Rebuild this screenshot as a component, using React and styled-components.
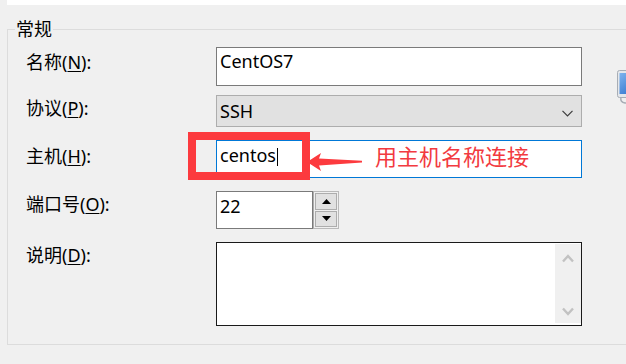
import React from 'react';
import styled, { createGlobalStyle } from 'styled-components';

const GlobalStyle = createGlobalStyle`
  html, body {
    margin: 0;
    padding: 0;
    background: #f0f0f0;
    overflow: hidden;
    font-family: "Noto Sans", "Noto Sans CJK SC", sans-serif;
  }
`;

const TopStrip = styled.div`
  height: 5px;
  margin-left: 7px;
  background: #fff;
`;

const Group = styled.fieldset`
  margin: 12px 0 0 7px;
  padding: 6px 0 18px 0;
  min-width: 0;
  border: 1px solid #dcdcdc;
  border-right: none;
  overflow: hidden;
`;

const Legend = styled.legend`
  margin-left: 7px;
  padding: 0 1px;
  font-size: 18px;
  line-height: 24px;
  color: #000;
`;

const Form = styled.div`
  padding-left: 18px;
`;

const Row = styled.div`
  display: flex;
  align-items: flex-start;
  margin-top: ${p => p.$gap || 0}px;
`;

const Label = styled.label`
  flex: none;
  width: 190px;
  padding-top: ${p => p.$offset || 0}px;
  font-size: 18px;
  line-height: 24px;
  color: #000;

  u {
    text-decoration-thickness: 1px;
    text-underline-offset: 2px;
  }
`;

const Field = styled.div`
  position: relative;
  box-sizing: border-box;
  flex: none;
  display: flex;
  align-items: flex-start;
  justify-content: ${p => p.$justify || 'flex-start'};
  width: ${p => p.$w || 366}px;
  height: ${p => p.$h}px;
  padding: ${p => p.$pt ?? 2}px ${p => p.$pr ?? 3}px 0 3px;
  border: 1px solid ${p => p.$border || '#7a7a7a'};
  background: ${p => p.$bg || '#fff'};
  font-size: 18px;
  line-height: 24px;
  color: #000;
`;

const Chevron = styled.svg`
  margin-top: 11px;
`;

const Caret = styled.span`
  display: inline-block;
  width: 1px;
  height: 18px;
  margin-left: 1px;
  background: #000;
  vertical-align: -4px;
`;

const SpinGroup = styled.div`
  display: flex;
`;

const Spinner = styled.div`
  box-sizing: border-box;
  display: flex;
  flex-direction: column;
  gap: 1px;
  width: 26px;
  height: 38px;
  padding: 1px;
  border: 1px solid #b9b9b9;
  border-left-color: #adadad;
`;

const SpinButton = styled.div`
  flex: 1;
  display: flex;
  align-items: center;
  justify-content: center;
  background: #e1e1e1;
  border: 1px solid #adadad;
`;

const ScrollTrack = styled.div`
  box-sizing: border-box;
  display: flex;
  flex-direction: column;
  justify-content: space-between;
  align-items: center;
  width: 26px;
  height: 79px;
  padding: 9px 0 6px;
  background: #f0f0f0;
`;

const Computer = styled.svg`
  flex: none;
  margin: 23px 0 -20px 35px;
`;

const Highlight = styled.div`
  position: absolute;
  left: -29px;
  top: -9px;
  width: 122px;
  height: 48px;
  box-sizing: border-box;
  border: 8px solid #fc3a3e;
`;

const Arrow = styled.svg`
  position: absolute;
  left: 88px;
  top: 9px;
`;

const Note = styled.span`
  position: absolute;
  left: 158px;
  top: 3px;
  font-family: "Noto Sans CJK SC", sans-serif;
  font-size: 22px;
  line-height: 22px;
  color: #f23a40;
  white-space: nowrap;
`;

const App = () => {
  return (
    <>
      <GlobalStyle />
      <TopStrip />
      <Group>
        <Legend>常规</Legend>
        <Form>
          <Row>
            <Label $offset={3}>名称(<u>N</u>):</Label>
            <Field $h={39} $pt={1}>CentOS7</Field>
            <Computer width="30" height="36" viewBox="0 0 30 36">
              <defs>
                <linearGradient id="scr" x1="0" y1="0" x2="1" y2="1">
                  <stop offset="0" stopColor="#7fb4ee" />
                  <stop offset="1" stopColor="#1d62c4" />
                </linearGradient>
              </defs>
              <rect x="0.5" y="0.5" width="29" height="27" rx="2" fill="#e4e7eb" stroke="#a7adb5" />
              <rect x="2.5" y="3" width="25" height="21" fill="url(#scr)" />
              <path d="M4 28 Q3 32 8 33 L22 33" fill="none" stroke="#a7adb5" strokeWidth="1.5" />
            </Computer>
          </Row>

          <Row $gap={9}>
            <Label $offset={1}>协议(<u>P</u>):</Label>
            <Field $h={32} $pt={3} $pr={8} $bg="#e1e1e1" $border="#adadad" $justify="space-between">
              <span>SSH</span>
              <Chevron width="11" height="7" viewBox="0 0 11 7">
                <polyline points="0.5,0.8 5.5,5.8 10.5,0.8" fill="none" stroke="#3c3c3c" strokeWidth="1.2" />
              </Chevron>
            </Field>
          </Row>

          <Row $gap={13}>
            <Label $offset={4}>主机(<u>H</u>):</Label>
            <Field $h={38} $border="#0078d7">
              <span>centos<Caret /></span>
              <Highlight />
              <Arrow width="60" height="24" viewBox="0 0 60 24">
                <polygon points="2,12 16,3 14,8.5 57,10.8 57,12.6 14,15.5 16,21" fill="#fc3a3e" />
              </Arrow>
              <Note>用主机名称连接</Note>
            </Field>
          </Row>

          <Row $gap={13}>
            <Label $offset={1}>端口号(<u>O</u>):</Label>
            <SpinGroup>
              <Field $w={97} $h={38}>22</Field>
              <Spinner>
                <SpinButton>
                  <svg width="9" height="5" viewBox="0 0 9 5">
                    <polygon points="0,5 4.5,0 9,5" fill="#000" />
                  </svg>
                </SpinButton>
                <SpinButton>
                  <svg width="9" height="5" viewBox="0 0 9 5">
                    <polygon points="0,0 4.5,5 9,0" fill="#000" />
                  </svg>
                </SpinButton>
              </Spinner>
            </SpinGroup>
          </Row>

          <Row $gap={13}>
            <Label $offset={1}>说明(<u>D</u>):</Label>
            <Field $h={84} $pt={1} $pr={0} $border="#1a1a1a" $justify="flex-end">
              <ScrollTrack>
                <svg width="12" height="10" viewBox="0 0 12 10">
                  <polyline points="1,8.5 6,3 11,8.5" fill="none" stroke="#c2c2c2" strokeWidth="2.4" />
                </svg>
                <svg width="12" height="10" viewBox="0 0 12 10">
                  <polyline points="1,1.5 6,7 11,1.5" fill="none" stroke="#c2c2c2" strokeWidth="2.4" />
                </svg>
              </ScrollTrack>
            </Field>
          </Row>
        </Form>
      </Group>
    </>
  );
};

export default App;
